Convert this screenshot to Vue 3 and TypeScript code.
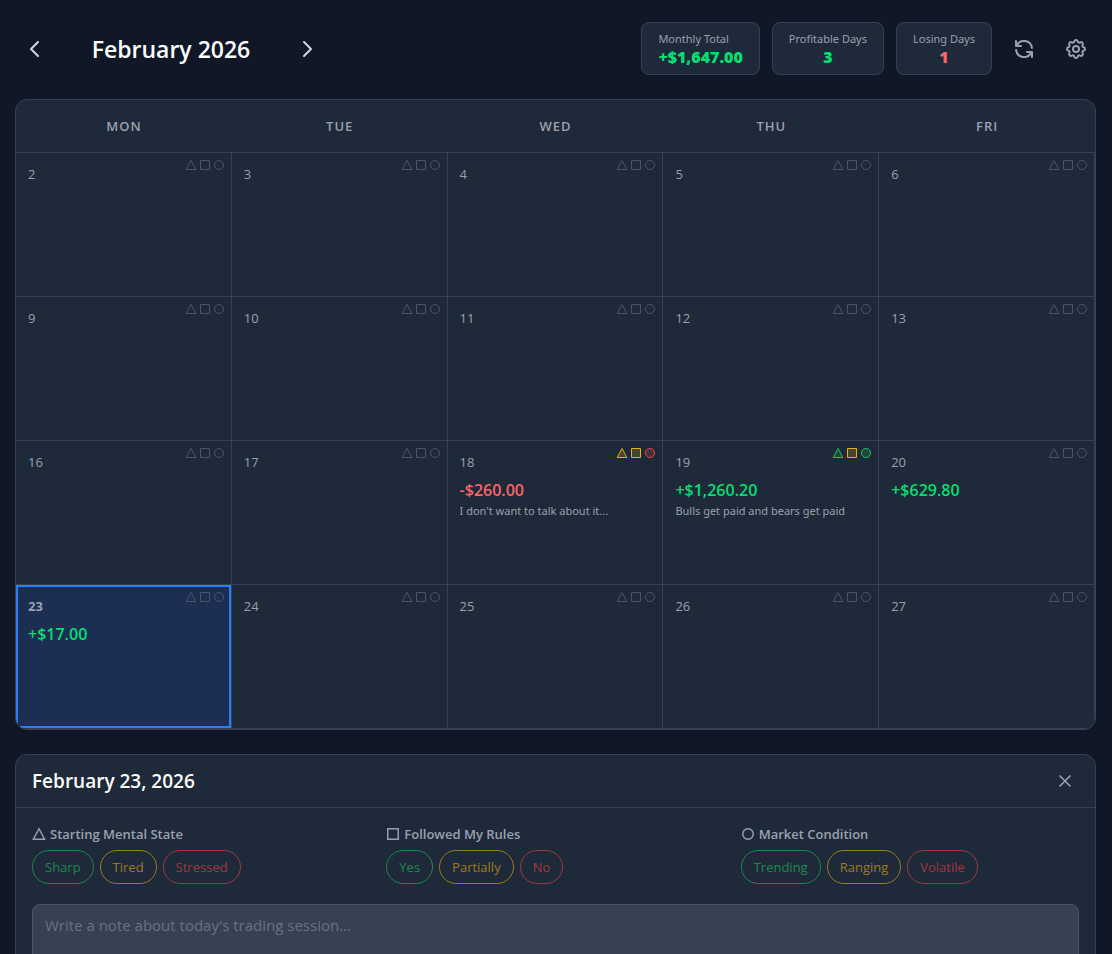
<script setup lang="ts">
import { ref } from 'vue'

type Tone = 'none' | 'good' | 'fair' | 'bad'

interface Day {
  date: number
  amount?: string
  note?: string
  marks: [Tone, Tone, Tone]
}

const blank: [Tone, Tone, Tone] = ['none', 'none', 'none']
const day = (date: number, extra: Partial<Day> = {}): Day => ({ date, marks: blank, ...extra })

const weekdays = ['Mon', 'Tue', 'Wed', 'Thu', 'Fri']

const weeks: Day[][] = [
  [2, 3, 4, 5, 6].map((d) => day(d)),
  [9, 10, 11, 12, 13].map((d) => day(d)),
  [
    day(16),
    day(17),
    day(18, { amount: '-$260.00', note: "I don't want to talk about it...", marks: ['fair', 'fair', 'bad'] }),
    day(19, { amount: '+$1,260.20', note: 'Bulls get paid and bears get paid', marks: ['good', 'fair', 'good'] }),
    day(20, { amount: '+$629.80' }),
  ],
  [day(23, { amount: '+$17.00' }), day(24), day(25), day(26), day(27)],
]

const stats = [
  { label: 'Monthly Total', value: '+$1,647.00', tone: 'gain', align: 'start' },
  { label: 'Profitable Days', value: '3', tone: 'gain', align: 'middle' },
  { label: 'Losing Days', value: '1', tone: 'loss', align: 'middle' },
]

const shapes = [
  'M6 1.5L10.8 10.5H1.2Z',
  'M1.5 1.5H10.5V10.5H1.5Z',
  'M10.5 6A4.5 4.5 0 1 1 1.5 6A4.5 4.5 0 1 1 10.5 6Z',
]

const groups = [
  { title: 'Starting Mental State', options: ['Sharp', 'Tired', 'Stressed'] },
  { title: 'Followed My Rules', options: ['Yes', 'Partially', 'No'] },
  { title: 'Market Condition', options: ['Trending', 'Ranging', 'Volatile'] },
]
const tones: Tone[] = ['good', 'fair', 'bad']

const selected = ref(23)
const note = ref('')
</script>

<template>
  <main class="page">
    <header class="topbar">
      <div class="month">
        <button class="icon-button light" type="button" aria-label="Previous month">
          <svg class="icon" viewBox="0 0 24 24"><path d="M15 19l-7-7 7-7" /></svg>
        </button>
        <h1>February 2026</h1>
        <button class="icon-button light" type="button" aria-label="Next month">
          <svg class="icon" viewBox="0 0 24 24"><path d="M9 5l7 7-7 7" /></svg>
        </button>
      </div>
      <div class="summary">
        <div v-for="s in stats" :key="s.label" class="stat" :class="s.align">
          <span class="stat-label">{{ s.label }}</span>
          <strong :class="s.tone">{{ s.value }}</strong>
        </div>
        <button class="icon-button" type="button" aria-label="Refresh">
          <svg class="icon" viewBox="0 0 24 24">
            <path d="M4 4v5h.582m15.356 2A8.001 8.001 0 004.582 9m0 0H9m11 11v-5h-.581m0 0a8.003 8.003 0 01-15.357-2m15.357 2H15" />
          </svg>
        </button>
        <button class="icon-button" type="button" aria-label="Settings">
          <svg class="icon" viewBox="0 0 24 24">
            <path d="M10.325 4.317c.426-1.756 2.924-1.756 3.35 0a1.724 1.724 0 002.573 1.066c1.543-.94 3.31.826 2.37 2.37a1.724 1.724 0 001.065 2.572c1.756.426 1.756 2.924 0 3.35a1.724 1.724 0 00-1.066 2.573c.94 1.543-.826 3.31-2.37 2.37a1.724 1.724 0 00-2.572 1.065c-.426 1.756-2.924 1.756-3.35 0a1.724 1.724 0 00-2.573-1.066c-1.543.94-3.31-.826-2.37-2.37a1.724 1.724 0 00-1.065-2.572c-1.756-.426-1.756-2.924 0-3.35a1.724 1.724 0 001.066-2.573c-.94-1.543.826-3.31 2.37-2.37.996.608 2.296.07 2.572-1.065z" />
            <path d="M15 12a3 3 0 11-6 0 3 3 0 016 0z" />
          </svg>
        </button>
      </div>
    </header>

    <section class="panel calendar" aria-label="Trading calendar">
      <table>
        <thead>
          <tr>
            <th v-for="w in weekdays" :key="w" scope="col">{{ w }}</th>
          </tr>
        </thead>
        <tbody>
          <tr v-for="(week, i) in weeks" :key="i">
            <td v-for="d in week" :key="d.date">
              <button
                class="day"
                :class="{ selected: d.date === selected }"
                type="button"
                @click="selected = d.date"
              >
                <span class="day-top">
                  <span class="date">{{ d.date }}</span>
                  <span class="marks">
                    <svg v-for="(m, k) in d.marks" :key="k" class="mark" :class="m" viewBox="0 0 12 12">
                      <path :d="shapes[k]" />
                    </svg>
                  </span>
                </span>
                <span v-if="d.amount" class="amount" :class="d.amount.startsWith('-') ? 'loss' : 'gain'">{{ d.amount }}</span>
                <span v-if="d.note" class="day-note">{{ d.note }}</span>
              </button>
            </td>
          </tr>
        </tbody>
      </table>
    </section>

    <section class="panel detail">
      <div class="detail-head">
        <h2>February {{ selected }}, 2026</h2>
        <button class="close" type="button" aria-label="Close">
          <svg class="icon small" viewBox="0 0 24 24"><path d="M6 18L18 6M6 6l12 12" /></svg>
        </button>
      </div>
      <div class="detail-body">
        <div class="groups">
          <div v-for="(g, k) in groups" :key="g.title" class="group" role="group" :aria-labelledby="`group-${k}`">
            <h3 :id="`group-${k}`">
              <svg class="group-mark" viewBox="0 0 12 12"><path :d="shapes[k]" /></svg>
              {{ g.title }}
            </h3>
            <div class="pills">
              <button v-for="(o, n) in g.options" :key="o" class="pill" :class="tones[n]" type="button">{{ o }}</button>
            </div>
          </div>
        </div>
        <textarea
          v-model="note"
          rows="4"
          aria-label="Session note"
          placeholder="Write a note about today's trading session..."
        ></textarea>
      </div>
    </section>
  </main>
</template>

<style>
body {
  background: #101828;
}
</style>

<style scoped>
.page {
  box-sizing: border-box;
  min-height: 100vh;
  padding: 22px 16px 24px 15px;
  background: #101828;
  color: #99a1af;
  font-family: 'Open Sans', 'Noto Sans', sans-serif;
}

.page * {
  box-sizing: border-box;
}

button {
  margin: 0;
  border: 0;
  background: none;
  color: inherit;
  font-family: inherit;
  cursor: pointer;
}

h1,
h2,
h3 {
  margin: 0;
  font-weight: 600;
}

.topbar,
.month,
.summary {
  display: flex;
  align-items: center;
}

.topbar {
  justify-content: space-between;
  margin-bottom: 24px;
}

.month {
  gap: 16px;
}

.month h1 {
  min-width: 200px;
  color: #fff;
  font-size: 23px;
  line-height: 32px;
  text-align: center;
}

.summary {
  gap: 12px;
}

.icon-button {
  display: flex;
  padding: 8px;
}

.icon-button.light {
  color: #d1d5dc;
}

.icon {
  width: 24px;
  height: 24px;
  fill: none;
  stroke: currentColor;
  stroke-width: 2;
  stroke-linecap: round;
  stroke-linejoin: round;
}

.icon.small {
  width: 20px;
  height: 20px;
}

.stat {
  display: flex;
  flex-direction: column;
  padding: 8px 16px 6px;
  border: 1px solid #364153;
  border-radius: 8px;
  background: #1e2939;
}

.stat.start {
  align-items: flex-start;
}

.stat.middle {
  align-items: center;
}

.stat-label {
  font-family: 'Noto Sans', 'Open Sans', sans-serif;
  font-size: 11px;
  line-height: 15px;
}

.stat strong {
  font-size: 16px;
  font-weight: 800;
  line-height: 22px;
}

.gain {
  color: #05df72;
}

.loss {
  color: #ff6467;
}

.panel {
  overflow: hidden;
  border: 1px solid #364153;
  border-radius: 12px;
  background: #1e2939;
}

table {
  width: 100%;
  border-collapse: separate;
  border-spacing: 0;
  table-layout: fixed;
}

th {
  height: 53px;
  padding: 0;
  border-bottom: 1px solid #364153;
  font-size: 13px;
  font-weight: 600;
  letter-spacing: 1px;
  text-transform: uppercase;
}

td {
  height: 144px;
  padding: 0;
  border-right: 1px solid #364153;
  border-bottom: 1px solid #364153;
}

.day {
  display: flex;
  flex-direction: column;
  width: 100%;
  height: 143px;
  padding: 6px 6px 6px 12px;
  text-align: left;
}

.day.selected {
  background: #1c2e52;
  box-shadow: inset 0 0 0 2px #2b7fff;
}

.day-top {
  display: flex;
  align-items: flex-start;
  justify-content: space-between;
}

.date {
  padding-top: 5px;
  font-size: 13px;
  line-height: 20px;
}

.selected .date {
  font-weight: 700;
}

.marks {
  display: flex;
  gap: 2px;
}

.mark {
  width: 12px;
  height: 12px;
  color: #4a5565;
  fill: none;
  stroke: currentColor;
}

.mark.good {
  color: #22c55e;
}

.mark.fair {
  color: #eab308;
}

.mark.bad {
  color: #ef4444;
}

.mark.good,
.mark.fair,
.mark.bad {
  fill: currentColor;
  fill-opacity: 0.2;
}

.amount {
  margin-top: 5px;
  font-size: 16px;
  font-weight: 600;
  line-height: 26px;
}

.day-note {
  overflow: hidden;
  font-family: 'Noto Sans', 'Open Sans', sans-serif;
  font-size: 11px;
  line-height: 16px;
  text-overflow: ellipsis;
  white-space: nowrap;
}

.detail {
  margin-top: 24px;
}

.detail-head {
  display: flex;
  align-items: center;
  justify-content: space-between;
  height: 53px;
  padding: 0 16px;
  border-bottom: 1px solid #364153;
}

.detail-head h2 {
  color: #fff;
  font-size: 19px;
  line-height: 28px;
}

.close {
  display: flex;
  padding: 4px;
}

.detail-body {
  padding: 16px;
}

.groups {
  display: grid;
  grid-template-columns: repeat(3, 1fr);
  gap: 16px;
  margin-bottom: 20px;
}

.group h3 {
  display: flex;
  align-items: center;
  gap: 4px;
  margin-bottom: 6px;
  font-size: 13px;
  line-height: 20px;
}

.group-mark {
  width: 14px;
  height: 14px;
  fill: none;
  stroke: currentColor;
  stroke-width: 1.25;
}

.pills {
  display: flex;
  gap: 6px;
}

.pill {
  padding: 6px 12px;
  border: 1px solid currentColor;
  border-radius: 17px;
  font-size: 13px;
  line-height: 20px;
  opacity: 0.6;
}

.pill.good {
  color: #22c55e;
}

.pill.fair {
  color: #eab308;
}

.pill.bad {
  color: #ef4444;
}

textarea {
  display: block;
  width: 100%;
  padding: 8px 12px;
  border: 1px solid #4a5565;
  border-radius: 8px;
  background: #364153;
  color: #fff;
  font-family: inherit;
  font-size: 15px;
  line-height: 24px;
  resize: none;
}

textarea::placeholder {
  color: #6a7282;
}
</style>
